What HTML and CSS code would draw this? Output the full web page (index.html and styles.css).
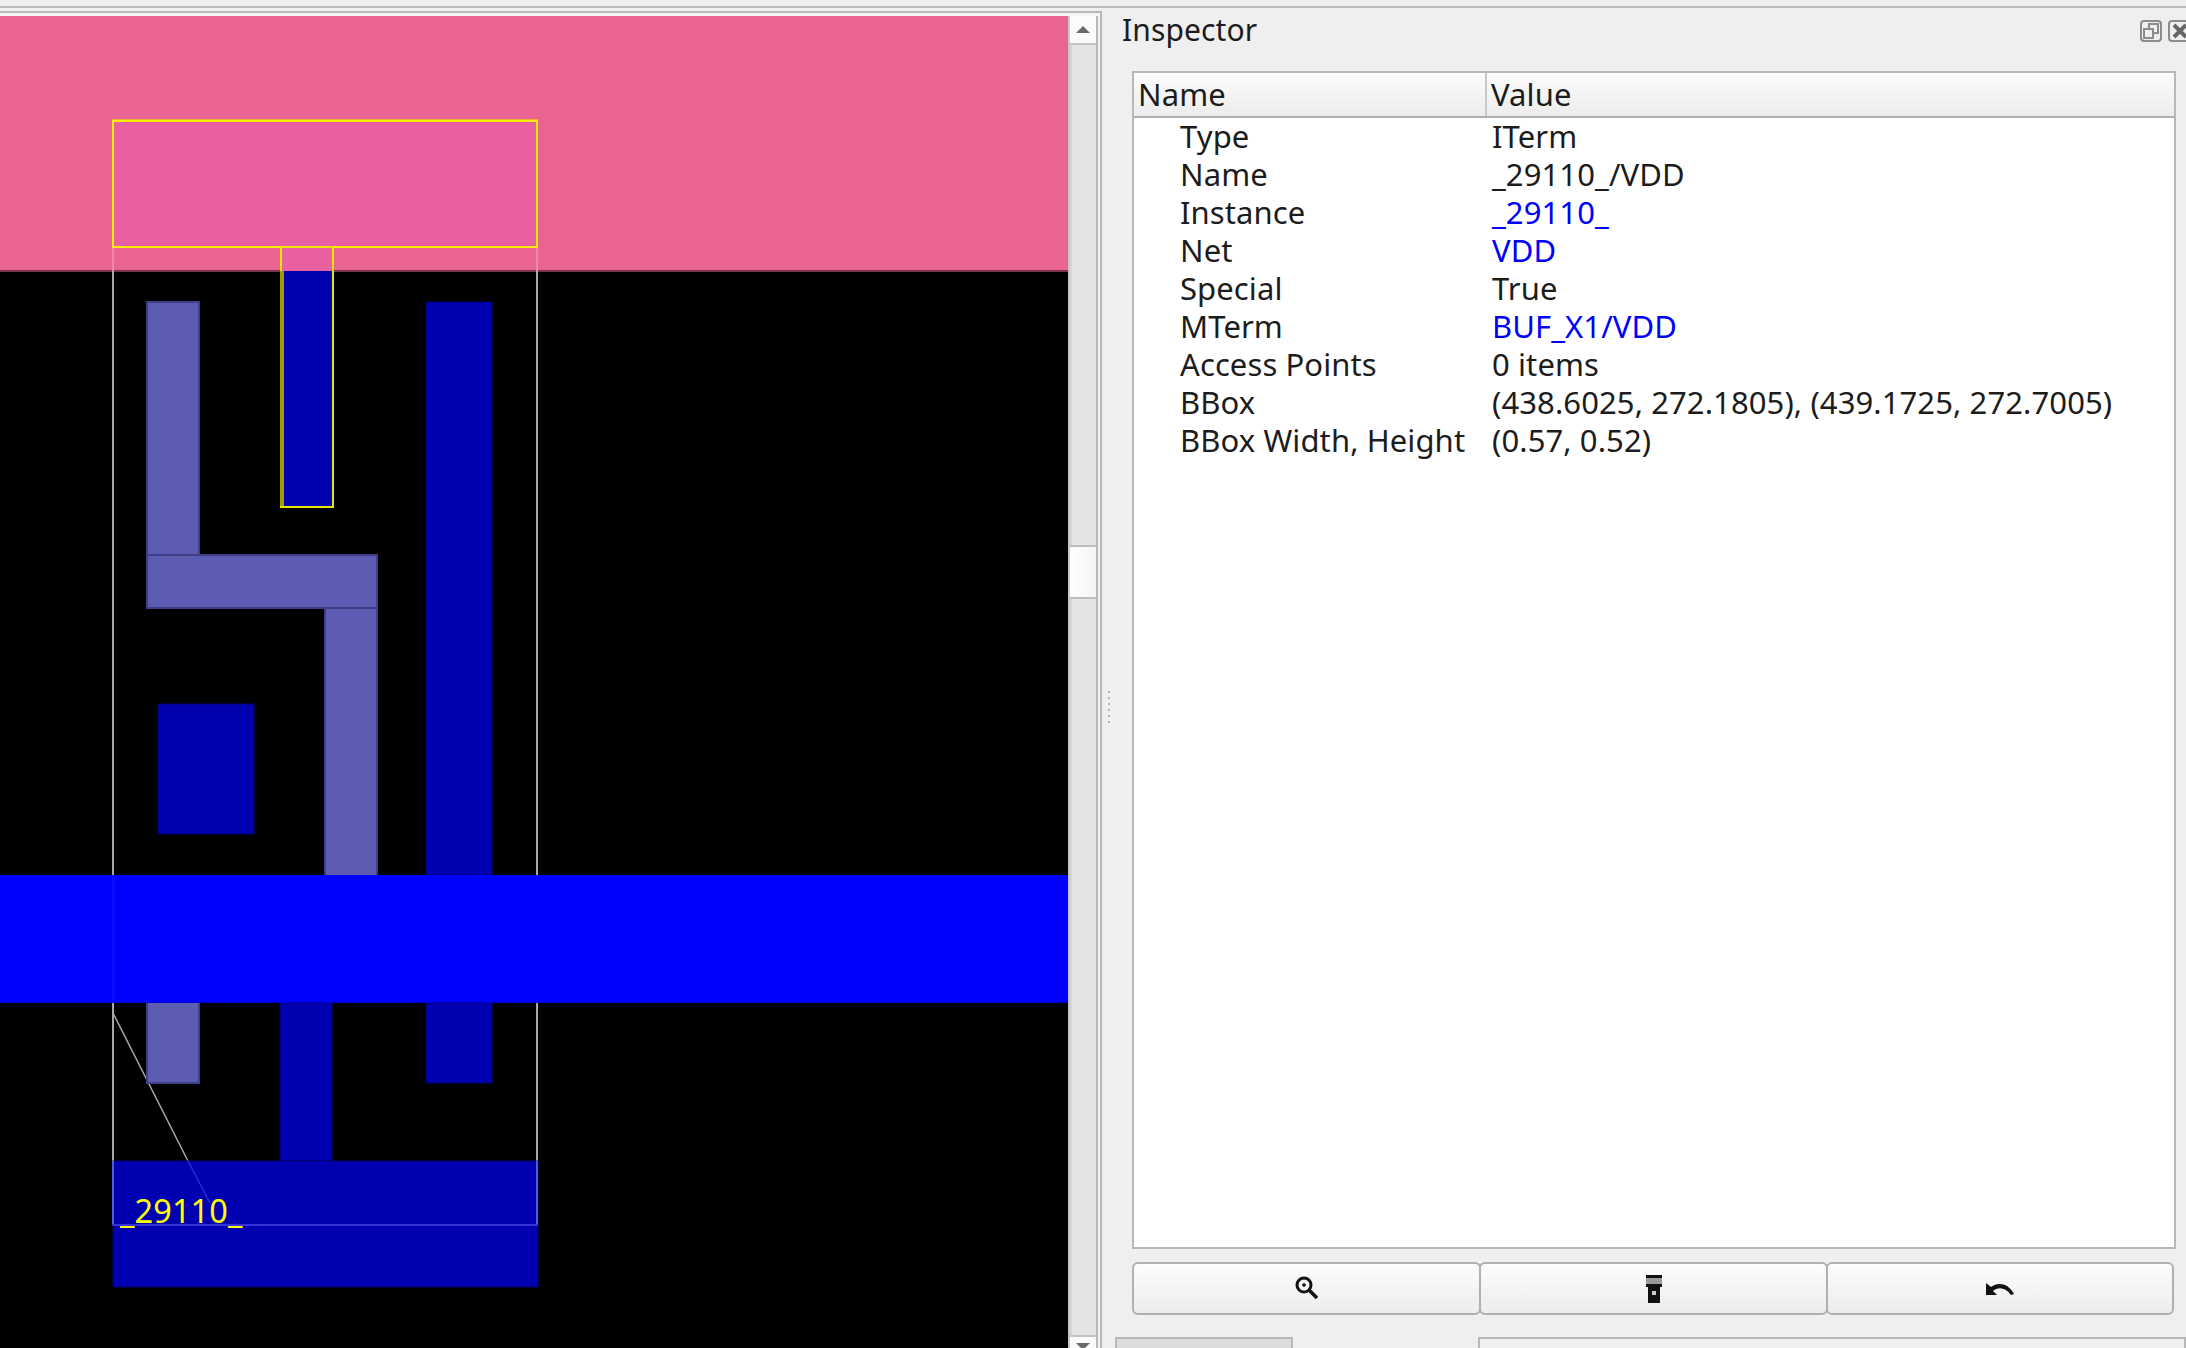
FILE: index.html
```html
<!DOCTYPE html>
<html lang="en">
<head>
    <meta charset="UTF-8">
    <title>Inspector</title>
    <link rel="stylesheet" href="styles.css">
</head>
<body>
    <div class="top-strip"></div>
    <div class="main">
        <div class="viewer">
            <div class="viewer-inner">
                <svg class="layout" viewBox="0 16 1068 1332" width="1068" height="1332">
                    <rect x="0" y="16" width="1068" height="255" fill="#e96491"/>
                    <rect x="0" y="270" width="1068" height="2" fill="#7a3350"/>
                    <line x1="113" y1="247" x2="113" y2="271" stroke="#f184ad" stroke-width="2"/>
                    <line x1="537" y1="247" x2="537" y2="271" stroke="#f184ad" stroke-width="2"/>
                    <line x1="113" y1="271" x2="113" y2="1161" stroke="#a8a8a8" stroke-width="2"/>
                    <line x1="537" y1="271" x2="537" y2="1161" stroke="#a8a8a8" stroke-width="2"/>
                    <line x1="113" y1="1013" x2="188" y2="1161" stroke="#a8a8a8" stroke-width="1.5"/>

                    <g fill="#5b5cb2" stroke="#3f3f88" stroke-width="2">
                        <rect x="147" y="302" width="52" height="253"/>
                        <rect x="147" y="555" width="230" height="53"/>
                        <rect x="325" y="608" width="52" height="280"/>
                        <rect x="147" y="990" width="52" height="93"/>
                    </g>
                    <g fill="#0000b0" stroke="#000070" stroke-width="1">
                        <rect x="426" y="302" width="66" height="573"/>
                        <rect x="426" y="1003" width="66" height="80"/>
                        <rect x="158" y="704" width="96" height="130"/>
                        <rect x="280" y="1003" width="52" height="158"/>
                        <rect x="113" y="1161" width="425" height="126"/>
                    </g>
                    <rect x="283" y="271" width="49" height="236" fill="#0000b0"/>
                    <rect x="0" y="875" width="1068" height="128" fill="#0000ff"/>
                    <rect x="112" y="875" width="3" height="128" fill="#0a0aff"/>
                    <rect x="0" y="1002" width="1068" height="1" fill="#0000cc"/>

                    <rect x="113" y="121" width="424" height="126" fill="#e960a1"/>
                    <rect x="281" y="247" width="52" height="24" fill="#e960a1"/>
                    <rect x="112" y="119" width="426" height="2" fill="#f0b030"/>
                    <rect x="113" y="121" width="424" height="126" fill="none" stroke="#ffee00" stroke-width="2"/>
                    <rect x="281" y="247" width="52" height="260" fill="none" stroke="#e6e600" stroke-width="2"/>
                    <rect x="280" y="271" width="4" height="235" fill="#a0a000"/>

                    <line x1="113" y1="1161" x2="113" y2="1225" stroke="#5a5ad4" stroke-width="2"/>
                    <line x1="537" y1="1161" x2="537" y2="1225" stroke="#5a5ad4" stroke-width="2"/>
                    <line x1="112" y1="1225" x2="538" y2="1225" stroke="#3333d6" stroke-width="2"/>
                    <line x1="188" y1="1161" x2="210" y2="1203" stroke="#2a2acc" stroke-width="1.5"/>
                    <text class="inst-label" x="120" y="1223">_29110_</text>
                </svg>
                <div class="scrollbar">
                    <div class="sb-btn sb-up"><span class="arrow-up"></span></div>
                    <div class="sb-track"></div>
                    <div class="sb-thumb"></div>
                    <div class="sb-track sb-track-low"></div>
                    <div class="sb-btn sb-down"><span class="arrow-down"></span></div>
                </div>
            </div>
        </div>

        <div class="splitter">
            <div class="grip">
                <span></span><span></span><span></span><span></span><span></span><span></span>
            </div>
        </div>

        <div class="dock">
            <div class="dock-title">
                <span>Inspector</span>
                <div class="title-btns">
                    <svg width="22" height="22" viewBox="0 0 22 22" fill="none" stroke="#8c8c8c" stroke-width="2">
                        <rect x="1" y="1" width="20" height="20" rx="3"/>
                        <rect x="9" y="4" width="9" height="9"/>
                        <rect x="4" y="9" width="9" height="9" fill="#efefef"/>
                    </svg>
                    <svg width="22" height="22" viewBox="0 0 22 22" fill="none" stroke="#8c8c8c" stroke-width="2">
                        <rect x="1" y="1" width="20" height="20" rx="3"/>
                        <path d="M6 5 L18 17 M18 5 L6 17" stroke="#666" stroke-width="4"/>
                    </svg>
                </div>
            </div>

            <div class="tree">
                <div class="tree-head">
                    <div class="col-name">Name</div>
                    <div class="col-value">Value</div>
                </div>
                <table class="props">
                    <tr><td>Type</td><td>ITerm</td></tr>
                    <tr><td>Name</td><td>_29110_/VDD</td></tr>
                    <tr><td>Instance</td><td class="link">_29110_</td></tr>
                    <tr><td>Net</td><td class="link">VDD</td></tr>
                    <tr><td>Special</td><td>True</td></tr>
                    <tr><td>MTerm</td><td class="link">BUF_X1/VDD</td></tr>
                    <tr><td>Access Points</td><td>0 items</td></tr>
                    <tr><td>BBox</td><td>(438.6025, 272.1805), (439.1725, 272.7005)</td></tr>
                    <tr><td>BBox Width, Height</td><td>(0.57, 0.52)</td></tr>
                </table>
            </div>

            <div class="actions">
                <button>
                    <svg width="24" height="26" viewBox="0 0 24 26" fill="none" stroke="#111">
                        <circle cx="9" cy="9" r="7" stroke-width="3"/>
                        <path d="M7 9 H11 M9 7 V11" stroke-width="1.5"/>
                        <path d="M14 14 L22 22" stroke-width="3.5"/>
                    </svg>
                </button>
                <button>
                    <svg width="16" height="28" viewBox="0 0 16 28">
                        <rect x="0" y="0" width="16" height="3" fill="#111"/>
                        <rect x="0" y="3" width="16" height="6" fill="#9a9a9a"/>
                        <rect x="0" y="9" width="16" height="3" fill="#111"/>
                        <rect x="2" y="12" width="12" height="16" fill="#111"/>
                        <rect x="6" y="16" width="4" height="4" fill="#ccc"/>
                    </svg>
                </button>
                <button>
                    <svg width="28" height="14" viewBox="0 0 28 14">
                        <path d="M0 1 V13 H11 L7 9 C12 5 19 5 25 13 L28 12 C22 1 12 0 5 5 Z" fill="#111"/>
                    </svg>
                </button>
            </div>

            <div class="tabs">
                <div class="tab-first"></div>
                <div class="tab-rest"></div>
            </div>
        </div>
    </div>
</body>
</html>
```

FILE: styles.css
```css
body {
    margin: 0;
    height: 1348px;
    overflow: hidden;
    background-color: #efefef;
    font-family: "Noto Sans", sans-serif;
    font-size: 31px;
    letter-spacing: 0.1px;
    color: #1c1c1c;
}
.top-strip {
    height: 6px;
    border-bottom: 2px solid #bdbdbd;
}
.main {
    display: flex;
    height: 1340px;
}

/* layout viewer */
.viewer {
    width: 1100px;
    margin-top: 3px;
    border-top: 2px solid #b8b8b8;
    border-right: 2px solid #b8b8b8;
    padding-top: 3px;
    background-color: #f4f4f4;
}
.viewer-inner {
    display: flex;
    height: 1332px;
}
.layout {
    display: block;
    flex: none;
    background-color: #000;
}
.inst-label {
    fill: #ffff00;
    font-family: "Noto Sans", sans-serif;
    font-size: 32.5px;
}
.scrollbar {
    width: 26px;
    flex: none;
    display: flex;
    flex-direction: column;
    border-left: 2px solid #c8c8c8;
    border-right: 2px solid #b8b8b8;
    background-color: #e4e4e4;
}
.sb-btn {
    height: 27px;
    flex: none;
    background-color: #fbfbfb;
    display: flex;
    align-items: center;
    justify-content: center;
}
.sb-up {
    border-bottom: 2px solid #c4c4c4;
}
.sb-down {
    height: 13px;
    border-top: 2px solid #c4c4c4;
    align-items: flex-start;
    padding-top: 6px;
    box-sizing: border-box;
}
.arrow-up {
    border: 7px solid transparent;
    border-top: 0;
    border-bottom: 7px solid #6a6a6a;
}
.arrow-down {
    border: 7px solid transparent;
    border-bottom: 0;
    border-top: 7px solid #6a6a6a;
}
.sb-track {
    height: 500px;
    flex: none;
    box-shadow: inset 2px 0 0 #d6d6d6;
}
.sb-track-low {
    height: auto;
    flex: 1;
}
.sb-thumb {
    height: 50px;
    flex: none;
    border-top: 2px solid #bcbcbc;
    border-bottom: 2px solid #bcbcbc;
    background: linear-gradient(to right, #ffffff, #f4f4f4);
}

.splitter {
    width: 20px;
    flex: none;
    padding-left: 6px;
    box-sizing: border-box;
}
.grip {
    display: flex;
    flex-direction: column;
    gap: 4px;
    margin-top: 683px;
}
.grip span {
    display: block;
    width: 2px;
    height: 2px;
    background-color: #b4b4b4;
}

/* inspector dock */
.dock {
    flex: 1;
    min-width: 0;
    display: flex;
    flex-direction: column;
}
.dock-title {
    height: 63px;
    display: flex;
    justify-content: space-between;
    align-items: flex-start;
    font-size: 30px;
    line-height: 44px;
}
.title-btns {
    display: flex;
    gap: 6px;
    margin-top: 12px;
    margin-right: -4px;
}
.tree {
    height: 1178px;
    margin: 0 10px 0 10px;
    border: 2px solid #b8b8b8;
    background-color: #fff;
    box-sizing: border-box;
}
.tree-head {
    display: flex;
    height: 45px;
    line-height: 43px;
    border-bottom: 2px solid #b0b0b0;
    box-sizing: border-box;
    background: linear-gradient(#fcfcfc, #ececec);
}
.col-name {
    width: 353px;
    padding-left: 4px;
    border-right: 2px solid #c8c8c8;
    box-sizing: border-box;
}
.col-value {
    padding-left: 4px;
}
.props {
    border-collapse: collapse;
    table-layout: fixed;
    width: 100%;
    margin-top: -1px;
}
.props td {
    height: 38px;
    padding: 0;
    line-height: 37px;
    white-space: nowrap;
}
.props td:first-child {
    width: 358px;
    padding-left: 46px;
    box-sizing: border-box;
}
.link {
    color: #0000ff;
}
.actions {
    display: flex;
    height: 53px;
    margin: 13px 12px 0 10px;
}
.actions button {
    width: 349px;
    flex: none;
    padding: 0;
    margin-left: -2px;
    border: 2px solid #b0b0b0;
    border-radius: 6px;
    background: linear-gradient(#fdfdfd, #ececec);
    display: flex;
    align-items: center;
    justify-content: center;
}
.actions button:first-child {
    margin-left: 0;
}
.actions button:last-child {
    flex: 1;
}
.tabs {
    display: flex;
    height: 11px;
    margin: 22px 0 0 -7px;
    justify-content: space-between;
}
.tab-first {
    width: 178px;
    border: 2px solid #b8b8b8;
    border-bottom: 0;
    background-color: #dcdcdc;
    box-sizing: border-box;
}
.tab-rest {
    width: 708px;
    border: 2px solid #b8b8b8;
    border-bottom: 0;
    box-sizing: border-box;
}
```
